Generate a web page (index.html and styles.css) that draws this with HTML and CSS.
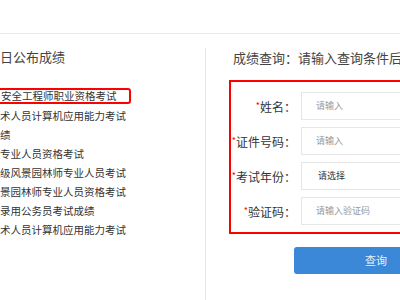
FILE: index.html
```html
<!DOCTYPE html>
<html lang="zh-CN">
<head>
<meta charset="utf-8">
<title>成绩查询</title>
<link rel="stylesheet" href="styles.css">
</head>
<body>
<div class="page">
  <div class="topbar"></div>
  <div class="main">
    <div class="left">
      <div class="left-title">日公布成绩</div>
      <ul class="exam-list">
        <li><span class="hl">安全工程师职业资格考试</span></li>
        <li>术人员计算机应用能力考试</li>
        <li>绩</li>
        <li>专业人员资格考试</li>
        <li>级风景园林师专业人员考试</li>
        <li>景园林师专业人员资格考试</li>
        <li>录用公务员考试成绩</li>
        <li>术人员计算机应用能力考试</li>
      </ul>
    </div>
    <div class="right">
      <div class="right-title">成绩查询：请输入查询条件后进行查询</div>
      <div class="form-box">
        <div class="row">
          <div class="label"><span class="req">*</span>姓名：</div>
          <div class="field placeholder">请输入</div>
        </div>
        <div class="row">
          <div class="label"><span class="req">*</span>证件号码：</div>
          <div class="field placeholder">请输入</div>
        </div>
        <div class="row">
          <div class="label"><span class="req">*</span>考试年份：</div>
          <div class="field select">请选择</div>
        </div>
        <div class="row">
          <div class="label"><span class="req">*</span>验证码：</div>
          <div class="field placeholder">请输入验证码</div>
        </div>
      </div>
      <div class="btn">查询</div>
    </div>
  </div>
</div>
</body>
</html>
```
FILE: styles.css
```css
html, body {
  margin: 0;
  padding: 0;
  background: #fff;
}
body {
  width: 400px;
  height: 300px;
  overflow: hidden;
  font-family: "Noto Sans CJK SC", "Noto Sans", sans-serif;
  color: #333;
}
.page {
  width: 700px;
}
.topbar {
  height: 33px;
  border-bottom: 1px solid #e8e8e8;
}
.main {
  display: flex;
  align-items: flex-start;
}
.left {
  width: 205px;
  padding-top: 13px;
}
.left-title {
  font-size: 13px;
  line-height: 20px;
  color: #444;
}
.exam-list {
  list-style: none;
  margin: 20px 0 0;
  padding: 0;
  font-size: 10.5px;
  line-height: 19px;
  color: #333;
}
.exam-list li {
  height: 19px;
  white-space: nowrap;
}
.hl {
  display: inline-block;
  height: 12px;
  line-height: 12px;
  padding: 0 12px 0 12px;
  margin-left: -13px;
  border: 2px solid #f00;
  border-radius: 3px;
  vertical-align: top;
  margin-top: 1px;
}
.right {
  margin-top: 14px;
  border-left: 1px solid #e6e6e6;
  height: 260px;
  width: 480px;
}
.right-title {
  font-size: 13px;
  line-height: 20px;
  color: #444;
  padding-left: 27px;
  white-space: nowrap;
}
.form-box {
  margin: 12px 0 0 23px;
  width: 300px;
  border: 2px solid #f00;
  padding: 10px 0 7px;
  display: flex;
  flex-direction: column;
  gap: 7px;
}
.row {
  display: flex;
  align-items: center;
  height: 28px;
}
.label {
  width: 65px;
  margin-right: 5px;
  text-align: right;
  font-size: 12px;
  color: #333;
  white-space: nowrap;
}
.req {
  color: #f00;
  font-size: 9px;
  vertical-align: 3px;
}
.field {
  box-sizing: border-box;
  height: 28px;
  width: 220px;
  border: 1px solid #e6e6e6;
  padding-left: 14px;
  font-size: 9px;
  line-height: 26px;
}
.placeholder {
  color: #999;
}
.select {
  color: #333;
  padding-left: 16px;
}
.btn {
  margin: 13px 0 0 88px;
  width: 164px;
  height: 27px;
  border-radius: 3px;
  background: #3b87d8;
  color: #e6f0fb;
  font-size: 11px;
  line-height: 27px;
  text-align: center;
}
```
